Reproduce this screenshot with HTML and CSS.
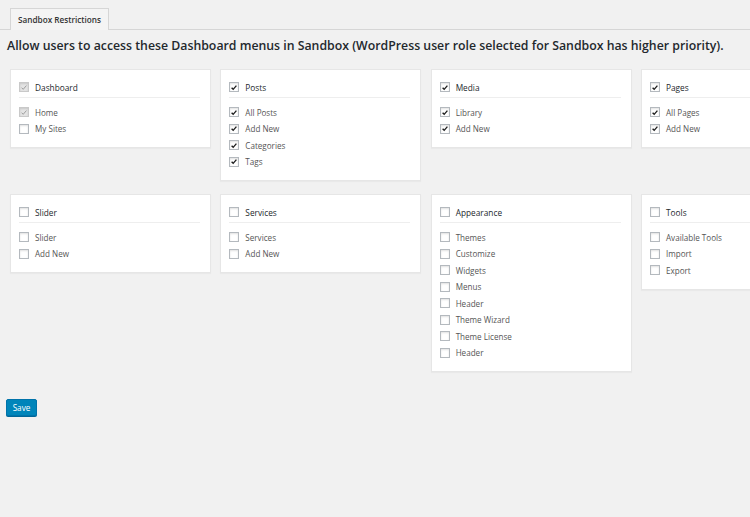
FILE: index.html
```html
<!DOCTYPE html>
<html>
<head>
<meta charset="utf-8">
<link rel="stylesheet" href="styles.css">
</head>
<body>
<div class="page">
  <div class="tabs"><span class="tab">Sandbox Restrictions</span></div>
  <h2 class="intro">Allow users to access these Dashboard menus in Sandbox (WordPress user role selected for Sandbox has higher priority).</h2>
  <div class="grid">
    <div class="card">
      <div class="title"><span class="cb disabled"><svg viewBox="0 0 10 10"><path d="M2 5.2 L4 7.3 L8 2.6"/></svg></span>Dashboard</div>
      <ul class="items">
        <li><span class="cb disabled"><svg viewBox="0 0 10 10"><path d="M2 5.2 L4 7.3 L8 2.6"/></svg></span>Home</li>
        <li><span class="cb"></span>My Sites</li>
      </ul>
    </div>
    <div class="card">
      <div class="title"><span class="cb on"><svg viewBox="0 0 10 10"><path d="M2 5.2 L4 7.3 L8 2.6"/></svg></span>Posts</div>
      <ul class="items">
        <li><span class="cb on"><svg viewBox="0 0 10 10"><path d="M2 5.2 L4 7.3 L8 2.6"/></svg></span>All Posts</li>
        <li><span class="cb on"><svg viewBox="0 0 10 10"><path d="M2 5.2 L4 7.3 L8 2.6"/></svg></span>Add New</li>
        <li><span class="cb on"><svg viewBox="0 0 10 10"><path d="M2 5.2 L4 7.3 L8 2.6"/></svg></span>Categories</li>
        <li><span class="cb on"><svg viewBox="0 0 10 10"><path d="M2 5.2 L4 7.3 L8 2.6"/></svg></span>Tags</li>
      </ul>
    </div>
    <div class="card">
      <div class="title"><span class="cb on"><svg viewBox="0 0 10 10"><path d="M2 5.2 L4 7.3 L8 2.6"/></svg></span>Media</div>
      <ul class="items">
        <li><span class="cb on"><svg viewBox="0 0 10 10"><path d="M2 5.2 L4 7.3 L8 2.6"/></svg></span>Library</li>
        <li><span class="cb on"><svg viewBox="0 0 10 10"><path d="M2 5.2 L4 7.3 L8 2.6"/></svg></span>Add New</li>
      </ul>
    </div>
    <div class="card">
      <div class="title"><span class="cb on"><svg viewBox="0 0 10 10"><path d="M2 5.2 L4 7.3 L8 2.6"/></svg></span>Pages</div>
      <ul class="items">
        <li><span class="cb on"><svg viewBox="0 0 10 10"><path d="M2 5.2 L4 7.3 L8 2.6"/></svg></span>All Pages</li>
        <li><span class="cb on"><svg viewBox="0 0 10 10"><path d="M2 5.2 L4 7.3 L8 2.6"/></svg></span>Add New</li>
      </ul>
    </div>
    <div class="card">
      <div class="title"><span class="cb"></span>Slider</div>
      <ul class="items">
        <li><span class="cb"></span>Slider</li>
        <li><span class="cb"></span>Add New</li>
      </ul>
    </div>
    <div class="card">
      <div class="title"><span class="cb"></span>Services</div>
      <ul class="items">
        <li><span class="cb"></span>Services</li>
        <li><span class="cb"></span>Add New</li>
      </ul>
    </div>
    <div class="card">
      <div class="title"><span class="cb"></span>Appearance</div>
      <ul class="items">
        <li><span class="cb"></span>Themes</li>
        <li><span class="cb"></span>Customize</li>
        <li><span class="cb"></span>Widgets</li>
        <li><span class="cb"></span>Menus</li>
        <li><span class="cb"></span>Header</li>
        <li><span class="cb"></span>Theme Wizard</li>
        <li><span class="cb"></span>Theme License</li>
        <li><span class="cb"></span>Header</li>
      </ul>
    </div>
    <div class="card">
      <div class="title"><span class="cb"></span>Tools</div>
      <ul class="items">
        <li><span class="cb"></span>Available Tools</li>
        <li><span class="cb"></span>Import</li>
        <li><span class="cb"></span>Export</li>
      </ul>
    </div>
  </div>
  <button class="save">Save</button>
</div>
</body>
</html>
```

FILE: styles.css
```css
html, body {
  margin: 0;
  padding: 0;
  background: #f1f1f1;
  overflow: hidden;
}
body {
  font-family: "Open Sans", "Noto Sans", "Liberation Sans", sans-serif;
  color: #444;
  width: 750px;
  height: 517px;
}
.page {
  display: flex;
  flex-direction: column;
  align-items: flex-start;
}
.tabs {
  align-self: stretch;
  display: flex;
  padding: 8px 0 0 10px;
  border-bottom: 1px solid #d6d6d6;
  height: 21px;
}
.tab {
  display: block;
  height: 21px;
  line-height: 22px;
  padding: 0 7px;
  border: 1px solid #d6d6d6;
  border-bottom: none;
  background: #f4f4f4;
  font-size: 8.2px;
  font-weight: 600;
  color: #333;
}
.intro {
  margin: 8px 0 0 7px;
  font-size: 12.3px;
  line-height: 16px;
  font-weight: 600;
  color: #23282d;
  white-space: nowrap;
}
.grid {
  display: grid;
  grid-template-columns: repeat(4, 201px);
  column-gap: 9.33px;
  row-gap: 13px;
  align-items: start;
  margin: 15px 0 0 10px;
}
.card {
  background: #fff;
  border: 1px solid #e6e6e6;
  box-shadow: 0 1px 1px rgba(0,0,0,0.03);
  padding: 9px 10px 10px 8px;
}
.title {
  display: flex;
  align-items: center;
  height: 16px;
  padding-bottom: 2px;
  border-bottom: 1px solid #eee;
  font-size: 8.3px;
  color: #23282d;
}
.items {
  list-style: none;
  margin: 6px 0 0;
  padding: 0;
}
.items li {
  display: flex;
  align-items: center;
  height: 16.5px;
  font-size: 8.1px;
  color: #555;
}
.cb {
  box-sizing: border-box;
  width: 10px;
  height: 10px;
  border: 1px solid #b4b9be;
  background: #fff;
  box-shadow: inset 0 1px 2px rgba(0,0,0,0.12);
  margin-right: 6px;
  flex: none;
  display: flex;
  align-items: center;
  justify-content: center;
}
.cb svg {
  width: 9px;
  height: 9px;
  fill: none;
  stroke: #1e1e1e;
  stroke-width: 1.7;
}
.cb.disabled {
  background: #e4e4e4;
  border-color: #c9c9c9;
}
.cb.disabled svg {
  stroke: #9a9a9a;
  stroke-width: 1.2;
}
.save {
  margin: 27px 0 0 6px;
  width: 31px;
  height: 17px;
  padding: 0;
  border: 1px solid #0073aa;
  border-radius: 2px;
  background: #0085ba;
  color: #fff;
  font-family: inherit;
  font-size: 8.2px;
  box-shadow: 0 1px 0 #006799;
}
```
